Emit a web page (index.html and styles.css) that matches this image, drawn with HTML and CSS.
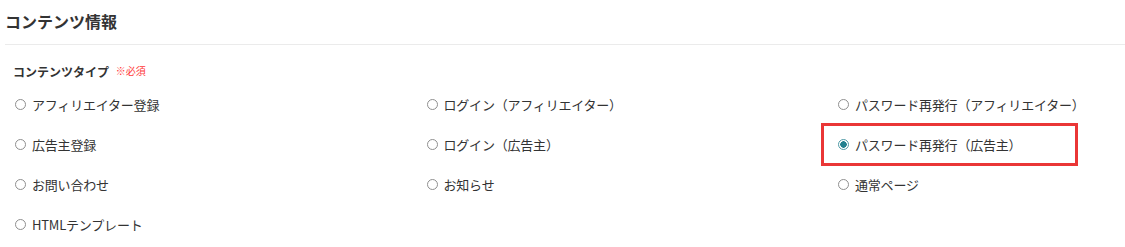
FILE: index.html
```html
<!DOCTYPE html>
<html lang="ja">
  <head>
    <meta charset="UTF-8" />
    <meta name="viewport" content="width=device-width, initial-scale=1.0" />
    <title>コンテンツ情報</title>

    <link rel="stylesheet" href="styles.css">
  </head>
  <body>
    <div class="panel">
      <h2 class="panel-title">コンテンツ情報</h2>

      <div class="field">
        <div class="field-label">コンテンツタイプ <span class="required">※必須</span></div>

        <div class="radio-grid">
          <label class="radio"><input type="radio" name="type" /> アフィリエイター登録</label>
          <label class="radio"><input type="radio" name="type" /> ログイン（アフィリエイター）</label>
          <label class="radio"><input type="radio" name="type" /> パスワード再発行（アフィリエイター）</label>

          <label class="radio"><input type="radio" name="type" /> 広告主登録</label>
          <label class="radio"><input type="radio" name="type" /> ログイン（広告主）</label>
          <label class="radio selected"><input type="radio" name="type" checked /> パスワード再発行（広告主）</label>

          <label class="radio"><input type="radio" name="type" /> お問い合わせ</label>
          <label class="radio"><input type="radio" name="type" /> お知らせ</label>
          <label class="radio"><input type="radio" name="type" /> 通常ページ</label>

          <label class="radio"><input type="radio" name="type" /> HTMLテンプレート</label>
        </div>
      </div>
    </div>
  </body>
</html>
```

FILE: styles.css
```css
body {
  margin: 0;
  background-color: #fff;
  color: #333;
  font-family: "Noto Sans CJK JP", "Noto Sans", sans-serif;
  overflow: hidden;
}

.panel {
  padding-left: 5px;
}

.panel-title {
  margin: 0;
  padding: 9px 0 11px 0;
  font-size: 16px;
  line-height: 24px;
  font-weight: bold;
  color: #333;
  border-bottom: 1px solid #ebebeb;
}

.field {
  padding-left: 8px;
}

.field-label {
  margin-top: 17px;
  margin-bottom: 3px;
  font-size: 12px;
  line-height: 18px;
  font-weight: bold;
}

.required {
  margin-left: 4px;
  color: #ff3b3b;
  font-size: 10px;
  font-weight: normal;
  vertical-align: 2px;
}

.radio-grid {
  display: grid;
  grid-template-columns: 411.5px 411.5px auto;
  grid-auto-rows: 40px;
}

.radio {
  position: relative;
  display: flex;
  align-items: center;
  gap: 6px;
  padding-left: 2px;
  font-size: 13px;
  letter-spacing: -0.2px;
  color: #333;
}

.radio input {
  appearance: none;
  margin: 0;
  width: 11px;
  height: 11px;
  border: 1px solid #8f8f8f;
  border-radius: 50%;
  background-color: #fff;
}

.radio input:checked {
  border-color: #4f9aa6;
  background: radial-gradient(circle, #22808f 0, #22808f 3px, #fff 3.5px);
}

.radio.selected::after {
  content: "";
  position: absolute;
  left: -15px;
  top: -1px;
  width: 251px;
  height: 37px;
  border: 3px solid #ea3636;
}
```
